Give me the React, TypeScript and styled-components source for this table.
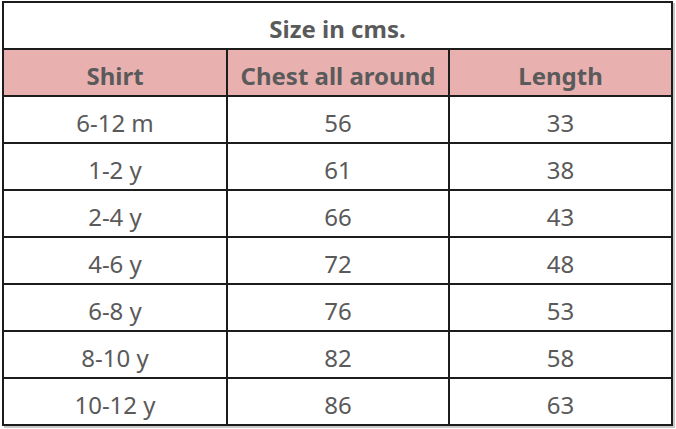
import React from "react";
import styled, { createGlobalStyle } from "styled-components";

const Global = createGlobalStyle`
  html, body {
    margin: 0;
    padding: 0;
    background: #ffffff;
  }
  body {
    font-family: "Noto Sans", "Open Sans", Arial, sans-serif;
  }
`;

const Page = styled.div`
  width: 676px;
  height: 429px;
  padding: 1px 0 0 2px;
  box-sizing: border-box;
  background: #ffffff;
`;

const Grid = styled.div`
  display: grid;
  grid-template-columns: 222px 220px 221px;
  grid-auto-rows: 45px;
  gap: 2px;
  padding: 2px;
  width: max-content;
  background: #1c1c1c;
  box-shadow: 2px 2px 0 #c8c8c8;
`;

const Cell = styled.div<{ $head?: boolean; $span?: boolean; $bold?: boolean }>`
  display: flex;
  align-items: center;
  justify-content: center;
  padding-top: 5px;
  box-sizing: border-box;
  background: ${(p) => (p.$head ? "#e8b1b0" : "#ffffff")};
  color: #5a5a5a;
  font-size: 24px;
  font-weight: ${(p) => (p.$bold ? 700 : 400)};
  white-space: nowrap;
  grid-column: ${(p) => (p.$span ? "1 / -1" : "auto")};
`;

const rows: [string, string, string][] = [
  ["6-12 m", "56", "33"],
  ["1-2 y", "61", "38"],
  ["2-4 y", "66", "43"],
  ["4-6 y", "72", "48"],
  ["6-8 y", "76", "53"],
  ["8-10 y", "82", "58"],
  ["10-12 y", "86", "63"],
];

export default function App() {
  return (
    <>
      <Global />
      <Page>
        <Grid>
          <Cell $span $bold>
            Size in cms.
          </Cell>
          <Cell $head $bold>Shirt</Cell>
          <Cell $head $bold>Chest all around</Cell>
          <Cell $head $bold>Length</Cell>
          {rows.map((r) =>
            r.map((v, i) => <Cell key={r[0] + i}>{v}</Cell>)
          )}
        </Grid>
      </Page>
    </>
  );
}
